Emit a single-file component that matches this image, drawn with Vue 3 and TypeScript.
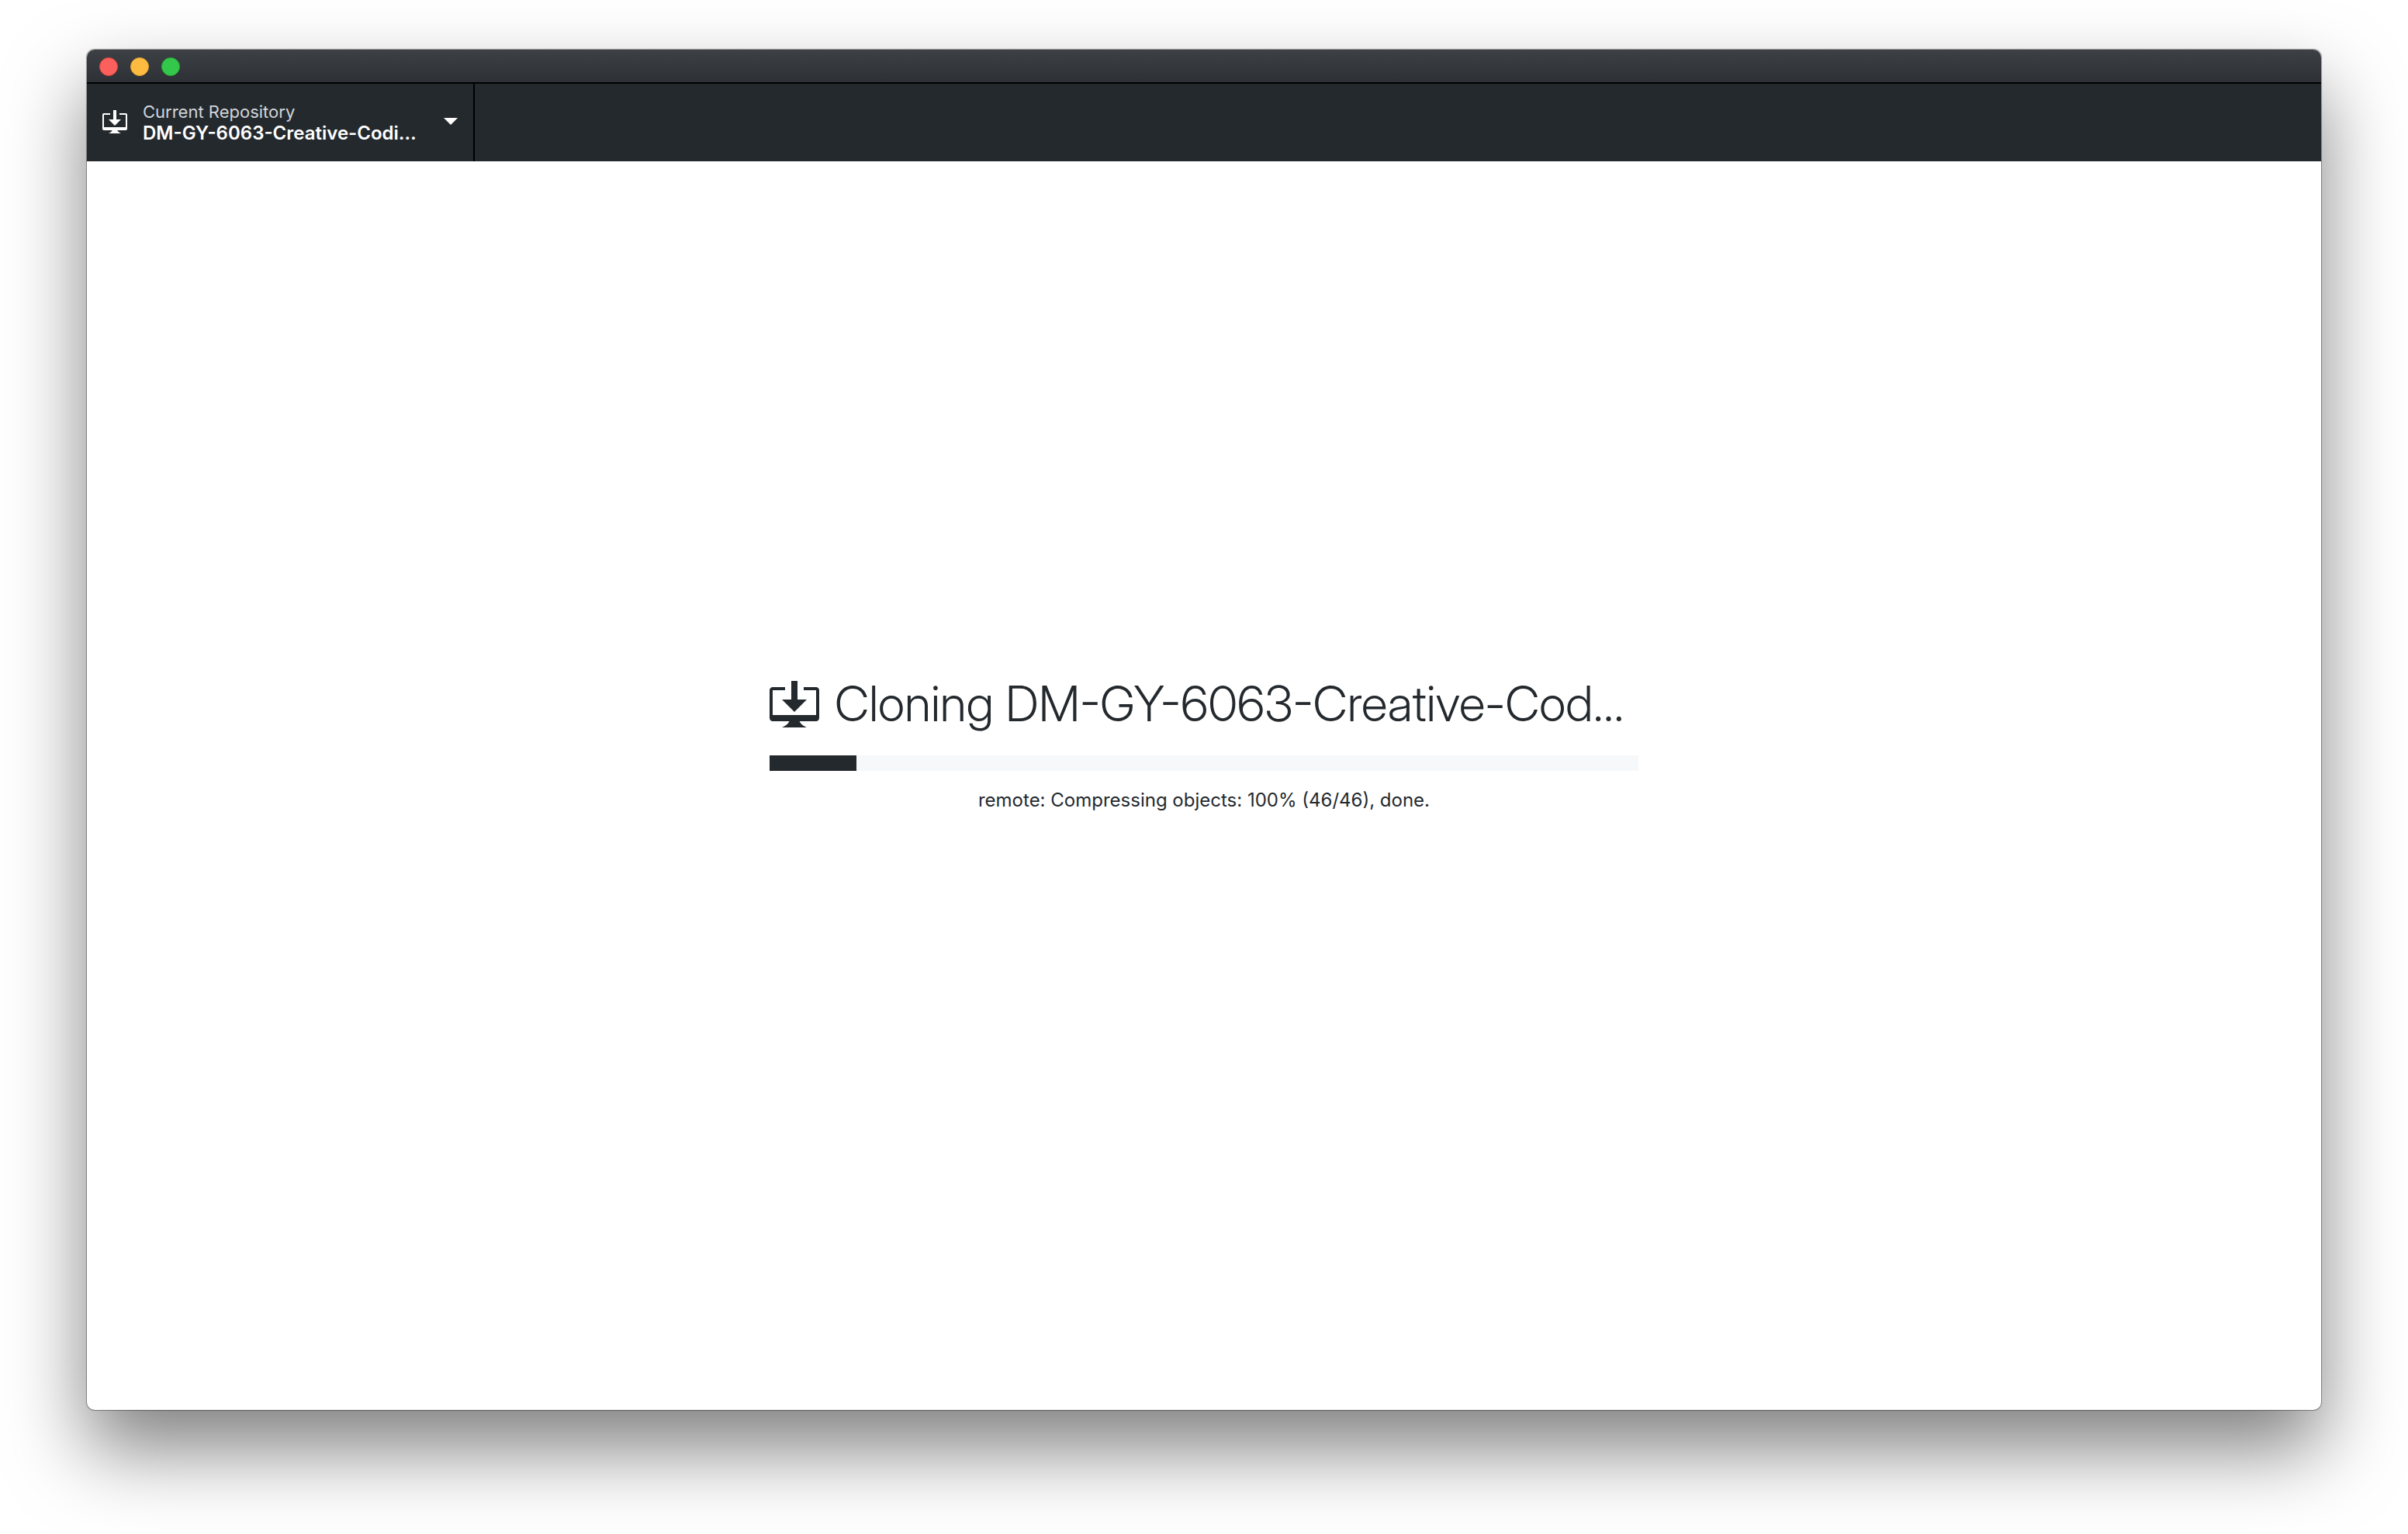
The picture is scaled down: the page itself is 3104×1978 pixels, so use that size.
<script setup lang="ts">
const repository = {
  label: 'Current Repository',
  name: 'DM-GY-6063-Creative-Codi…',
}

const clone = {
  title: 'Cloning DM-GY-6063-Creative-Cod…',
  value: 10,
  status: 'remote: Compressing objects: 100% (46/46), done.',
}

const windowControls = ['close', 'minimize', 'zoom']

const desktopDownload =
  'M4 6h3V0h2v6h3l-4 4-4-4zm11-4h-4v1h4v8H1V3h4V2H1c-.55 0-1 .45-1 1v9c0 .55.45 1 1 1h5.34c-.25.61-.86 1.39-2.34 2h8c-1.48-.61-2.09-1.39-2.34-2H15c.55 0 1-.45 1-1V3c0-.55-.45-1-1-1z'
</script>

<template>
  <div class="desktop">
    <div class="window">
      <header class="title-bar">
        <button
          v-for="control in windowControls"
          :key="control"
          type="button"
          class="control"
          :class="control"
          :aria-label="control"
        ></button>
      </header>

      <nav class="toolbar">
        <button type="button" class="repository">
          <svg class="icon" viewBox="0 0 16 16" aria-hidden="true">
            <path :d="desktopDownload" />
          </svg>
          <span class="repository-text">
            <span class="label">{{ repository.label }}</span>
            <span class="name">{{ repository.name }}</span>
          </span>
          <svg class="caret" viewBox="0 0 18 12" aria-hidden="true">
            <path d="M0 0h18l-9 9z" />
          </svg>
        </button>
      </nav>

      <main class="content">
        <section class="cloning">
          <div class="heading">
            <svg class="icon-large" viewBox="0 0 16 16" aria-hidden="true">
              <path :d="desktopDownload" />
            </svg>
            <h1 id="clone-title">{{ clone.title }}</h1>
          </div>
          <progress :value="clone.value" max="100" aria-labelledby="clone-title"></progress>
          <p class="status">{{ clone.status }}</p>
        </section>
      </main>
    </div>
  </div>
</template>

<style>
body {
  margin: 0;
  background: #fff;
}
</style>

<style scoped>
.desktop {
  box-sizing: border-box;
  display: flex;
  flex-direction: column;
  min-height: 100vh;
  padding: 64px 112px 160px;
  overflow: hidden;
  color: #24292e;
  font-family: Inter, 'Liberation Sans', sans-serif;
}

.window {
  display: flex;
  flex: 1;
  flex-direction: column;
  border-radius: 10px;
  background: #fff;
  box-shadow:
    0 0 1px 1px rgba(0, 0, 0, 0.35),
    0 50px 100px rgba(0, 0, 0, 0.5);
}

button {
  margin: 0;
  padding: 0;
  border: 0;
  font: inherit;
}

.title-bar {
  display: flex;
  align-items: center;
  gap: 16px;
  height: 40px;
  padding: 2px 16px 0;
  border-bottom: 2px solid #000;
  border-radius: 10px 10px 0 0;
  background: linear-gradient(#3d4045, #2d3034);
}

.control {
  width: 24px;
  height: 24px;
  border-radius: 50%;
}

.close {
  border: 1px solid #e2443f;
  background: #fc605c;
}

.minimize {
  border: 1px solid #dfa032;
  background: #fdbc40;
}

.zoom {
  border: 1px solid #27aa35;
  background: #34c84a;
}

.toolbar {
  display: flex;
  height: 100px;
  background: #24292e;
}

.repository {
  display: flex;
  align-items: center;
  box-sizing: border-box;
  width: 500px;
  padding: 0 20px;
  border-right: 2px solid #000;
  background: #24292e;
  color: #fff;
  text-align: left;
}

.icon {
  width: 32px;
  height: 32px;
  margin-right: 20px;
  fill: #fff;
}

.repository-text {
  display: flex;
  flex: 1;
  flex-direction: column;
  min-width: 0;
  white-space: nowrap;
}

.label {
  color: #d1d5da;
  font-size: 22px;
  line-height: 28px;
}

.name {
  font-size: 24px;
  font-weight: 600;
  line-height: 28px;
}

.caret {
  width: 18px;
  height: 12px;
  fill: #fff;
}

.content {
  display: flex;
  flex: 1;
  align-items: center;
  justify-content: center;
}

.cloning {
  width: 1120px;
  max-width: 100%;
}

.heading {
  display: flex;
  align-items: flex-start;
  gap: 20px;
  height: 64px;
  margin-bottom: 32px;
}

.icon-large {
  flex: none;
  width: 64px;
  height: 64px;
  fill: #24292e;
}

h1 {
  margin: 0;
  font-size: 63px;
  font-weight: 300;
  font-family: 'Inter Display', Inter, 'Liberation Sans', sans-serif;
  font-variation-settings: 'opsz' 31;
  line-height: 58px;
  white-space: nowrap;
}

progress {
  display: block;
  width: 100%;
  height: 20px;
  border: 0;
  background: #f6f8fa;
  appearance: none;
}

progress::-webkit-progress-bar {
  background: #f6f8fa;
}

progress::-webkit-progress-value {
  background: #24292e;
}

.status {
  min-height: 134px;
  margin: 20px 0 0;
  font-size: 24px;
  line-height: 36px;
  text-align: center;
}
</style>
